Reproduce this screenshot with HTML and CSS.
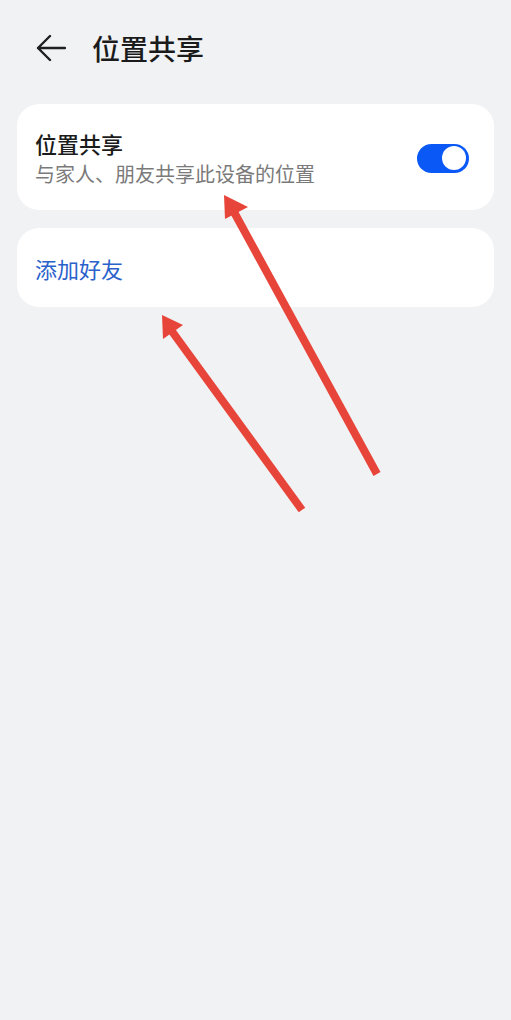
FILE: index.html
```html
<!DOCTYPE html>
<html lang="zh-CN">
<head>
<meta charset="utf-8">
<link rel="stylesheet" href="styles.css">
</head>
<body>
<div class="page">
  <header class="header">
    <svg class="back" width="30" height="28" viewBox="0 0 30 28">
      <path d="M2 14 H29 M14 2 L2 14 L14 26" fill="none" stroke="#1f1f1f" stroke-width="2.4" stroke-linecap="round" stroke-linejoin="round"/>
    </svg>
    <h1 class="title">位置共享</h1>
  </header>
  <main class="content">
    <section class="card card-share">
      <div class="text">
        <div class="item-title">位置共享</div>
        <div class="item-sub">与家人、朋友共享此设备的位置</div>
      </div>
      <div class="toggle"><span class="knob"></span></div>
    </section>
    <section class="card card-add">
      <div class="add-text">添加好友</div>
    </section>
  </main>
  <svg class="annot" width="511" height="1020" viewBox="0 0 511 1020">
    <g stroke="#e8453a" stroke-width="8" stroke-linecap="butt" fill="#e8453a">
      <line x1="377" y1="474" x2="234" y2="212"/>
      <line x1="302" y1="510" x2="171" y2="330"/>
    </g>
    <g fill="#e8453a">
      <polygon points="224,195 248,207 225,219"/>
      <polygon points="162,315 183,325 163,339"/>
    </g>
  </svg>
</div>
</body>
</html>
```

FILE: styles.css
```css
* { box-sizing: border-box; margin: 0; padding: 0; }
html, body {
  width: 511px;
  height: 1020px;
  background: #f1f2f4;
  font-family: "Noto Sans CJK SC", "Noto Sans", sans-serif;
  overflow: hidden;
}
.page { position: relative; width: 511px; height: 1020px; }
.header {
  height: 96px;
  display: flex;
  align-items: center;
  padding-left: 36px;
}
.back { display: block; margin-right: 26px; }
.title {
  font-size: 28px;
  font-weight: 500;
  color: #1b1b1b;
  line-height: 36px;
}
.content {
  padding: 8px 17px 0;
  display: flex;
  flex-direction: column;
  gap: 18px;
}
.card {
  background: #fff;
  border-radius: 22px;
  display: flex;
  align-items: center;
  padding: 0 25px 0 18px;
}
.card-share { height: 106px; justify-content: space-between; padding-top: 2px; }
.text { display: flex; flex-direction: column; gap: 4px; }
.item-title {
  font-size: 22px;
  font-weight: 500;
  color: #1b1b1b;
  line-height: 28px;
}
.item-sub {
  font-size: 20px;
  color: #7a7a7a;
  line-height: 26px;
}
.toggle {
  width: 52px;
  height: 29px;
  border-radius: 15px;
  background: #0a59f7;
  position: relative;
}
.knob {
  position: absolute;
  right: 3px;
  top: 2.5px;
  width: 24px;
  height: 24px;
  border-radius: 50%;
  background: #fff;
}
.card-add { height: 79px; }
.add-text {
  font-size: 22px;
  color: #2a62cc;
  line-height: 28px;
}
.annot { position: absolute; left: 0; top: 0; pointer-events: none; }
```
